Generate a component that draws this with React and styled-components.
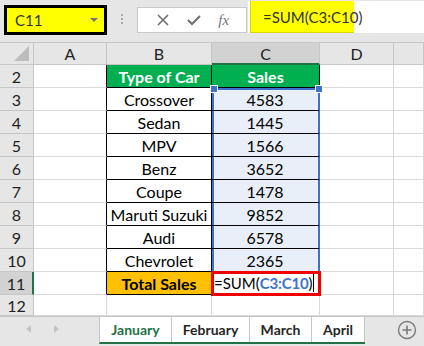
import React from "react"
import styled, { createGlobalStyle } from "styled-components"

const GlobalStyle = createGlobalStyle`
  body {
    margin: 0;
    font-family: Lato, "Liberation Sans", sans-serif;
  }
`;

const columns = [
  { key: "A" },
  { key: "B" },
  { key: "C", selected: true },
  { key: "D" },
  { key: "" },
];

const cars = [
  ["Crossover", "4583"],
  ["Sedan", "1445"],
  ["MPV", "1566"],
  ["Benz", "3652"],
  ["Coupe", "1478"],
  ["Maruti Suzuki", "9852"],
  ["Audi", "6578"],
  ["Chevrolet", "2365"],
];

const tabs = [
  { name: "January", w: 72, active: true },
  { name: "February", w: 78 },
  { name: "March", w: 62 },
  { name: "April", w: 53 },
];

const App = () => {
  return (
    <Window>
      <GlobalStyle />
      <FormulaBar>
        <NameBox>
          C11
          <Caret />
        </NameBox>
        <Grip>
          <i /><i /><i />
        </Grip>
        <Buttons>
          <svg width="12" height="12" viewBox="0 0 12 12">
            <path d="M1 1 L11 11 M11 1 L1 11" stroke="#6e6e6e" strokeWidth="1.6" fill="none" />
          </svg>
          <svg width="14" height="12" viewBox="0 0 14 12">
            <path d="M1 6 L5 10 L13 2" stroke="#6e6e6e" strokeWidth="2" fill="none" />
          </svg>
          <Fx>fx</Fx>
        </Buttons>
        <Input>
          <Marked>=SUM(C3:C10)</Marked>
        </Input>
      </FormulaBar>

      <Sheet>
        <Corner>
          <svg width="15" height="15" viewBox="0 0 15 15">
            <path d="M15 0 L15 15 L0 15 Z" fill="#bdbdbd" />
          </svg>
        </Corner>
        {columns.map((c, i) => (
          <ColHead key={i} $selected={c.selected}>{c.key}</ColHead>
        ))}

        <RowHead>2</RowHead>
        <Cell $rightLine="#000" />
        <Cell $fill="#00b050" $color="#fff" $bold $rightLine="#000" $bottomLine="#000">Type of Car</Cell>
        <Cell $fill="#00b050" $color="#fff" $bold $rightLine="#000" $bottomLine="#000">Sales</Cell>
        <Cell />
        <Cell />

        {cars.map(([name, sales], i) => (
          <React.Fragment key={name}>
            <RowHead>{i + 3}</RowHead>
            <Cell $rightLine="#000" />
            <Cell $rightLine="#000" $bottomLine="#000">{name}</Cell>
            <RangeCell $first={i === 0}>
              {i === 0 && <Handle $side="left" />}
              {i === 0 && <Handle $side="right" />}
              {sales}
            </RangeCell>
            <Cell />
            <Cell />
          </React.Fragment>
        ))}

        <RowHead $selected>11</RowHead>
        <Cell $rightLine="#000" />
        <Cell $fill="#ffc000" $bold $rightLine="#000" $bottomLine="#000">Total Sales</Cell>
        <EditCell>
          =SUM(<Ref>C3:C10</Ref>)<Cursor />
        </EditCell>
        <Cell />
        <Cell />

        <RowHead>12</RowHead>
        <Cell />
        <Cell />
        <Cell />
        <Cell />
        <Cell />
      </Sheet>

      <TabBar>
        <Scroller>
          <Arrow $dir="left" />
          <Arrow $dir="right" />
        </Scroller>
        <Tabs>
          {tabs.map((t) => (
            <Tab key={t.name} $w={t.w} $active={t.active}>{t.name}</Tab>
          ))}
        </Tabs>
        <AddSheet>
          <svg width="20" height="20" viewBox="0 0 20 20">
            <circle cx="10" cy="10" r="8.5" stroke="#7a7a7a" strokeWidth="1.4" fill="none" />
            <path d="M10 5.5 V14.5 M5.5 10 H14.5" stroke="#7a7a7a" strokeWidth="1.6" />
          </svg>
        </AddSheet>
      </TabBar>
    </Window>
  )
}

export default App;

const Window = styled.div`
width: 424px;
height: 346px;
overflow: hidden;
background: #e6e6e6;
display: flex;
flex-direction: column;
`;

const FormulaBar = styled.div`
height: 42px;
display: flex;
align-items: flex-start;
box-sizing: border-box;
padding-left: 4px;
`;

const NameBox = styled.div`
margin-top: 5px;
width: 103px;
height: 30px;
box-sizing: border-box;
border: 3px solid #000;
background: #ffff00;
color: #333;
font-size: 15px;
padding-left: 8px;
display: flex;
align-items: center;
justify-content: space-between;
padding-right: 6px;
`;

const Caret = styled.span`
width: 0;
height: 0;
border-left: 4px solid transparent;
border-right: 4px solid transparent;
border-top: 4px solid #777;
`;

const Grip = styled.div`
width: 30px;
height: 38px;
display: flex;
flex-direction: column;
align-items: center;
justify-content: center;
gap: 2px;

i {
  width: 2px;
  height: 2px;
  background: #aaa;
}
`;

const Buttons = styled.div`
margin-top: 7px;
width: 110px;
height: 26px;
box-sizing: border-box;
background: #fff;
border: 1px solid #c8c8c8;
display: flex;
align-items: center;
justify-content: space-around;
padding: 0 8px 0 10px;
`;

const Fx = styled.span`
font-family: "Liberation Serif", serif;
font-style: italic;
font-size: 15px;
color: #777;
`;

const Input = styled.div`
margin-top: 1px;
margin-left: 1px;
flex: 1;
height: 32px;
background: #fff;
padding-left: 2px;
display: flex;
`;

const Marked = styled.div`
width: 104px;
box-sizing: border-box;
background: #ffff00;
border-left: 1px solid #d8d800;
border-bottom: 1px solid #d8d800;
font-size: 15px;
color: #333;
padding-left: 12px;
display: flex;
align-items: center;
`;

const Sheet = styled.div`
display: grid;
grid-template-columns: 34px 73px 105px 108px 74px 30px;
grid-template-rows: 23px repeat(10, 23px) 21px;
background: #fff;
`;

const Header = styled.div`
box-sizing: border-box;
background: ${(p) => (p.$selected ? "#d2d2d2" : "#e6e6e6")};
color: #222;
font-size: 16px;
display: flex;
align-items: center;
justify-content: center;
`;

const Corner = styled(Header)`
border-right: 1px solid #c6c6c6;
border-bottom: 1px solid #c6c6c6;
border-top: 1px solid #c6c6c6;
justify-content: flex-end;
align-items: flex-end;
padding: 0 4px 3px 0;
`;

const ColHead = styled(Header)`
border-top: 1px solid #c6c6c6;
border-right: 1px solid #c6c6c6;
border-bottom: ${(p) => (p.$selected ? "2px solid #217346" : "1px solid #c6c6c6")};
`;

const RowHead = styled(Header)`
border-bottom: 1px solid #c6c6c6;
border-right: ${(p) => (p.$selected ? "2px solid #217346" : "1px solid #c6c6c6")};
`;

const Cell = styled.div`
box-sizing: border-box;
position: relative;
border-right: 1px solid ${(p) => p.$rightLine || "#d9d9d9"};
border-bottom: 1px solid ${(p) => p.$bottomLine || "#d9d9d9"};
background: ${(p) => p.$fill || "#fff"};
color: ${(p) => p.$color || "#000"};
font-weight: ${(p) => (p.$bold ? 700 : 400)};
font-size: 16px;
white-space: nowrap;
display: flex;
align-items: center;
justify-content: center;
`;

const RangeCell = styled(Cell)`
background: #e9eff8;
border-right: 2px solid #3d72cc;
border-bottom: 1px solid #000;
box-shadow: inset 2px 0 0 #3d72cc ${(p) => (p.$first ? ", inset 0 2px 0 #3d72cc" : "")};
`;

const Handle = styled.span`
position: absolute;
top: -3px;
${(p) => (p.$side === "left" ? "left: -2px;" : "right: -5px;")}
width: 6px;
height: 6px;
background: #3d72cc;
border: 1px solid #fff;
z-index: 2;
`;

const EditCell = styled(Cell)`
justify-content: flex-start;
padding-left: 2px;
font-size: 15px;
z-index: 1;
outline: 3px solid #ee0000;
outline-offset: -2px;
`;

const Ref = styled.span`
color: #3d72cc;
font-weight: 700;
letter-spacing: -0.2px;
`;

const Cursor = styled.span`
width: 1px;
height: 18px;
background: #000;
margin-left: 1px;
`;

const TabBar = styled.div`
flex: 1;
display: flex;
border-top: 1px solid #c6c6c6;
`;

const Scroller = styled.div`
width: 99px;
display: flex;
align-items: center;
padding-left: 26px;
gap: 23px;
box-sizing: border-box;
padding-bottom: 6px;
`;

const Arrow = styled.span`
width: 0;
height: 0;
border-top: 4px solid transparent;
border-bottom: 4px solid transparent;
${(p) => (p.$dir === "left" ? "border-right: 5px solid #c3c3c3;" : "border-left: 5px solid #c3c3c3;")}
`;

const Tabs = styled.div`
display: flex;
height: 25px;
border-bottom: 2px solid #217346;
border-left: 1px solid #c6c6c6;
`;

const Tab = styled.div`
width: ${(p) => p.$w}px;
box-sizing: border-box;
background: #fff;
border-right: 1px solid #c6c6c6;
color: ${(p) => (p.$active ? "#217346" : "#262626")};
font-weight: 700;
font-size: 14px;
display: flex;
align-items: center;
justify-content: center;
`;

const AddSheet = styled.div`
flex: 1;
display: flex;
justify-content: flex-end;
align-items: center;
padding-right: 7px;
padding-bottom: 4px;
`;
